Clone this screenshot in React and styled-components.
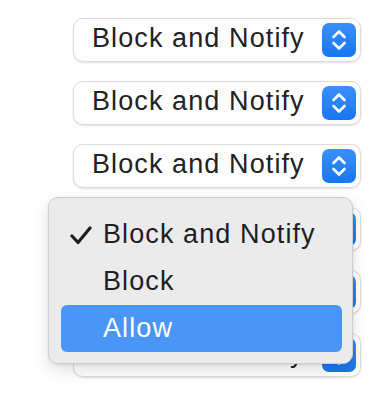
import React from "react";
import styled, { createGlobalStyle } from "styled-components";

const GlobalStyle = createGlobalStyle`
  html, body {
    margin: 0;
    padding: 0;
    background: #ffffff;
  }
  body {
    font-family: "Liberation Sans", Arial, sans-serif;
  }
`;

const options = ["Block and Notify", "Block", "Allow"];

const Stepper = () => (
  <StepperBox>
    <svg width="34" height="34" viewBox="0 0 34 34" fill="none">
      <polyline
        points="11.5,14 17,8.5 22.5,14"
        stroke="#fff"
        strokeWidth="2.6"
        strokeLinecap="round"
        strokeLinejoin="round"
      />
      <polyline
        points="11.5,20 17,25.5 22.5,20"
        stroke="#fff"
        strokeWidth="2.6"
        strokeLinecap="round"
        strokeLinejoin="round"
      />
    </svg>
  </StepperBox>
);

const CheckMark = () => (
  <svg width="22" height="19" viewBox="0 0 22 19" fill="none">
    <polyline
      points="2,10 8,16.5 20,2"
      stroke="#1e1e1e"
      strokeWidth="3.2"
      strokeLinecap="round"
      strokeLinejoin="round"
    />
  </svg>
);

const App = () => {
  const rows = [0, 1, 2, 3, 4, 5];
  return (
    <>
      <GlobalStyle />
      <Page>
        <Column>
          {rows.map((i) => (
            <PopupButton key={i}>
              <Label>Block and Notify</Label>
              <Stepper />
            </PopupButton>
          ))}
        </Column>
        <Menu>
          {options.map((opt, i) => (
            <MenuItem key={opt} $active={i === 2}>
              <CheckSlot>{i === 0 && <CheckMark />}</CheckSlot>
              {opt}
            </MenuItem>
          ))}
        </Menu>
      </Page>
    </>
  );
};

export default App;

const Page = styled.div`
  position: relative;
  width: 387px;
  height: 403px;
  overflow: hidden;
  background: #ffffff;
`;

const Column = styled.div`
  display: flex;
  flex-direction: column;
  gap: 19px;
  padding: 18px 0 0 73px;
`;

const PopupButton = styled.div`
  display: flex;
  align-items: center;
  justify-content: space-between;
  box-sizing: border-box;
  width: 288px;
  height: 44px;
  padding: 0 4px 0 18px;
  background: #ffffff;
  border: 1px solid #dcdcdc;
  border-radius: 10px;
  box-shadow: 0 1px 2px rgba(0, 0, 0, 0.12);
`;

const Label = styled.span`
  font-size: 27px;
  letter-spacing: 1.1px;
  color: #222222;
  margin-top: -3px;
`;

const StepperBox = styled.div`
  display: flex;
  width: 34px;
  height: 34px;
  border-radius: 7px;
  background: linear-gradient(#3b8ffa, #1876f2);
`;

const Menu = styled.div`
  position: absolute;
  left: 48px;
  top: 197px;
  box-sizing: border-box;
  width: 305px;
  height: 167px;
  padding: 13px 10px 12px 12px;
  background: #ebebeb;
  border: 1px solid #cdcdcd;
  border-radius: 10px;
  box-shadow: 0 6px 16px rgba(0, 0, 0, 0.13), 0 1px 3px rgba(0, 0, 0, 0.08);
`;

const MenuItem = styled.div`
  display: flex;
  align-items: center;
  height: 47px;
  padding-left: 9px;
  border-radius: 6px;
  font-size: 27px;
  letter-spacing: 1.1px;
  color: ${(p) => (p.$active ? "#ffffff" : "#1f1f1f")};
  background: ${(p) => (p.$active ? "#4b95f6" : "transparent")};
`;

const CheckSlot = styled.span`
  display: flex;
  align-items: center;
  width: 33px;
  padding-top: 1px;
`;
